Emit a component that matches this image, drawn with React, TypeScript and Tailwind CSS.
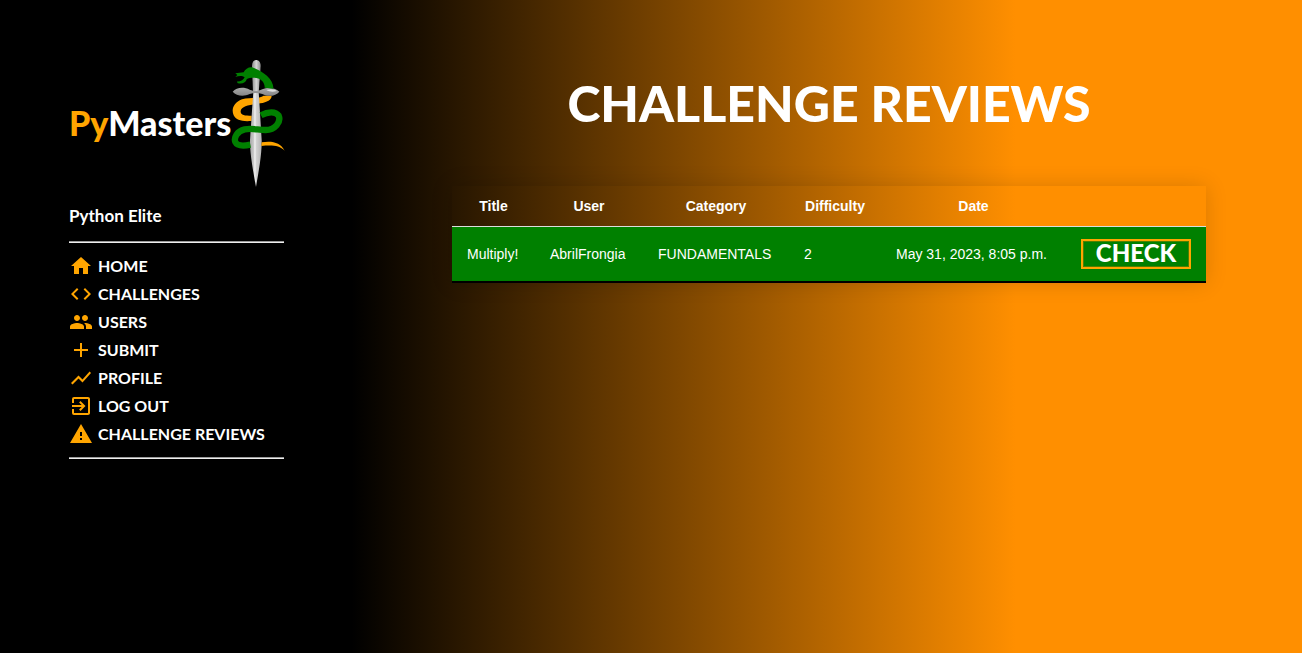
import React from "react";
import {
  MdHome,
  MdCode,
  MdPeople,
  MdAdd,
  MdShowChart,
  MdExitToApp,
  MdWarning,
} from "react-icons/md";

const links = [
  { label: "HOME", Icon: MdHome },
  { label: "CHALLENGES", Icon: MdCode },
  { label: "USERS", Icon: MdPeople },
  { label: "SUBMIT", Icon: MdAdd },
  { label: "PROFILE", Icon: MdShowChart },
  { label: "LOG OUT", Icon: MdExitToApp },
  { label: "CHALLENGE REVIEWS", Icon: MdWarning },
];

const reviews = [
  {
    title: "Multiply!",
    user: "AbrilFrongia",
    category: "FUNDAMENTALS",
    difficulty: 2,
    date: "May 31, 2023, 8:05 p.m.",
  },
];

function SwordAndSnake() {
  return (
    <svg viewBox="510 24 162 390" className="h-[130px] w-[54px] shrink-0" aria-hidden="true">
      <defs>
        <linearGradient id="blade" x1="0" x2="1" y1="0" y2="0">
          <stop offset="0" stopColor="#a8a8a8" />
          <stop offset="0.3" stopColor="#c9c9c9" />
          <stop offset="0.42" stopColor="#f2f2f2" />
          <stop offset="0.55" stopColor="#d2d2d2" />
          <stop offset="1" stopColor="#b4b4b4" />
        </linearGradient>
        <linearGradient id="grip" x1="0" x2="1" y1="0" y2="0">
          <stop offset="0" stopColor="#8c8c8c" />
          <stop offset="0.5" stopColor="#d6d6d6" />
          <stop offset="1" stopColor="#8c8c8c" />
        </linearGradient>
        <linearGradient id="guard" x1="0" x2="0" y1="0" y2="1">
          <stop offset="0" stopColor="#a8a8a8" />
          <stop offset="1" stopColor="#858585" />
        </linearGradient>
      </defs>
      <path d="M576 128L573 48C573 36 578 30 585 30C593 30 599 36 599 48L593 128Z" fill="url(#grip)" />
      <path
        d="M632 137C632 149 618 157 598 160C568 164 541 167 539 183C538 196 551 197 572 197V213C542 215 526 211 518 196C510 178 518 158 543 148C566 141 594 147 608 137Z"
        fill="orange"
      />
      <path d="M577 124H593L602 270C603 310 593 365 585 411C577 365 566 310 567 270Z" fill="url(#blade)" />
      <path
        d="M515 125C526 112 548 109 566 119C580 124 590 124 604 118C622 110 646 115 655 125C645 138 622 142 604 132C590 128 580 128 566 132C548 141 526 138 515 125Z"
        fill="url(#guard)"
      />
      <path d="M616 120C629 115 642 118 647 123C635 127 625 125 616 120Z" fill="#dedede" />
      <path
        d="M523 70L548 67C553 56 566 49 577 53C604 63 639 87 637 116L611 113C612 96 598 83 579 83C570 83 561 84 557 88C555 99 542 103 529 99V94C539 96 546 91 551 82C545 77 534 77 523 81L529 75Z"
        fill="green"
      />
      <path
        d="M600 196C622 184 644 184 653 197C661 216 642 240 614 240C591 240 574 234 551 238C528 243 518 263 523 276C529 289 548 288 568 284"
        fill="none"
        stroke="green"
        strokeWidth="19"
      />
      <path d="M602 277C635 272 658 278 671 302C655 286 633 285 601 288Z" fill="orange" />
    </svg>
  );
}

function Sidebar() {
  return (
    <aside className="w-[356px] shrink-0 pr-[72px] pl-[69px] pt-[58px] font-['Lato',sans-serif] font-bold text-white">
      <a href="#home" className="flex items-center justify-between">
        <span className="text-[34px] leading-10 font-black">
          <span className="text-[orange]">Py</span>Masters
        </span>
        <SwordAndSnake />
      </a>
      <p className="mt-4 text-[17px] leading-6">Python Elite</p>
      <hr className="mt-[13px] h-[2px] border-0 border-t border-[#9a9a9a] bg-[#eeeeee]" />
      <nav className="py-[9px]">
        <ul>
          {links.map(({ label, Icon }) => (
            <li key={label}>
              <a href="#menu" className="flex h-7 items-center gap-[5px] text-base">
                <Icon className="size-6 shrink-0 text-[orange]" />
                <span className="whitespace-nowrap">{label}</span>
              </a>
            </li>
          ))}
        </ul>
      </nav>
      <hr className="h-[2px] border-0 border-t border-[#9a9a9a] bg-[#eeeeee]" />
    </aside>
  );
}

export default function App() {
  return (
    <div className="flex min-h-screen bg-[linear-gradient(90deg,#000000_27%,#ff8f00_78%)]">
      <Sidebar />
      <main className="flex min-w-0 grow flex-col items-center px-6 pt-[67px] text-white">
        <h1 className="font-['Lato',sans-serif] text-[50px] leading-[72px] font-black">
          CHALLENGE REVIEWS
        </h1>
        <table className="mt-[47px] border-collapse font-['Liberation_Sans',sans-serif] text-[14px] leading-4 shadow-[0_0_20px_rgba(0,0,0,0.15)]">
          <thead>
            <tr className="border-b border-[#dddddd]">
              <th className="min-w-[83px] px-[15px] py-3">Title</th>
              <th className="min-w-[108px] px-[15px] py-3">User</th>
              <th className="min-w-[146px] px-[15px] py-3">Category</th>
              <th className="min-w-[92px] px-[15px] py-3">Difficulty</th>
              <th className="min-w-[185px] px-[15px] py-3">Date</th>
              <td className="px-[15px] py-3"></td>
            </tr>
          </thead>
          <tbody>
            {reviews.map((r) => (
              <tr key={r.title} className="border-b-2 border-black bg-[green]">
                <td className="px-[15px] py-3">{r.title}</td>
                <td className="px-[15px] py-3">{r.user}</td>
                <td className="px-[15px] py-3">{r.category}</td>
                <td className="px-[15px] py-3">{r.difficulty}</td>
                <td className="px-[15px] py-3">{r.date}</td>
                <td className="px-[15px] py-3">
                  <button
                    type="button"
                    className="flex h-[30px] w-[110px] items-center justify-center border-2 border-[orange] pb-[2px] font-['Lato',sans-serif] text-2xl leading-6 font-black inset-shadow-[0_0_0_1px_#4f8000]"
                  >
                    CHECK
                  </button>
                </td>
              </tr>
            ))}
          </tbody>
        </table>
      </main>
    </div>
  );
}
